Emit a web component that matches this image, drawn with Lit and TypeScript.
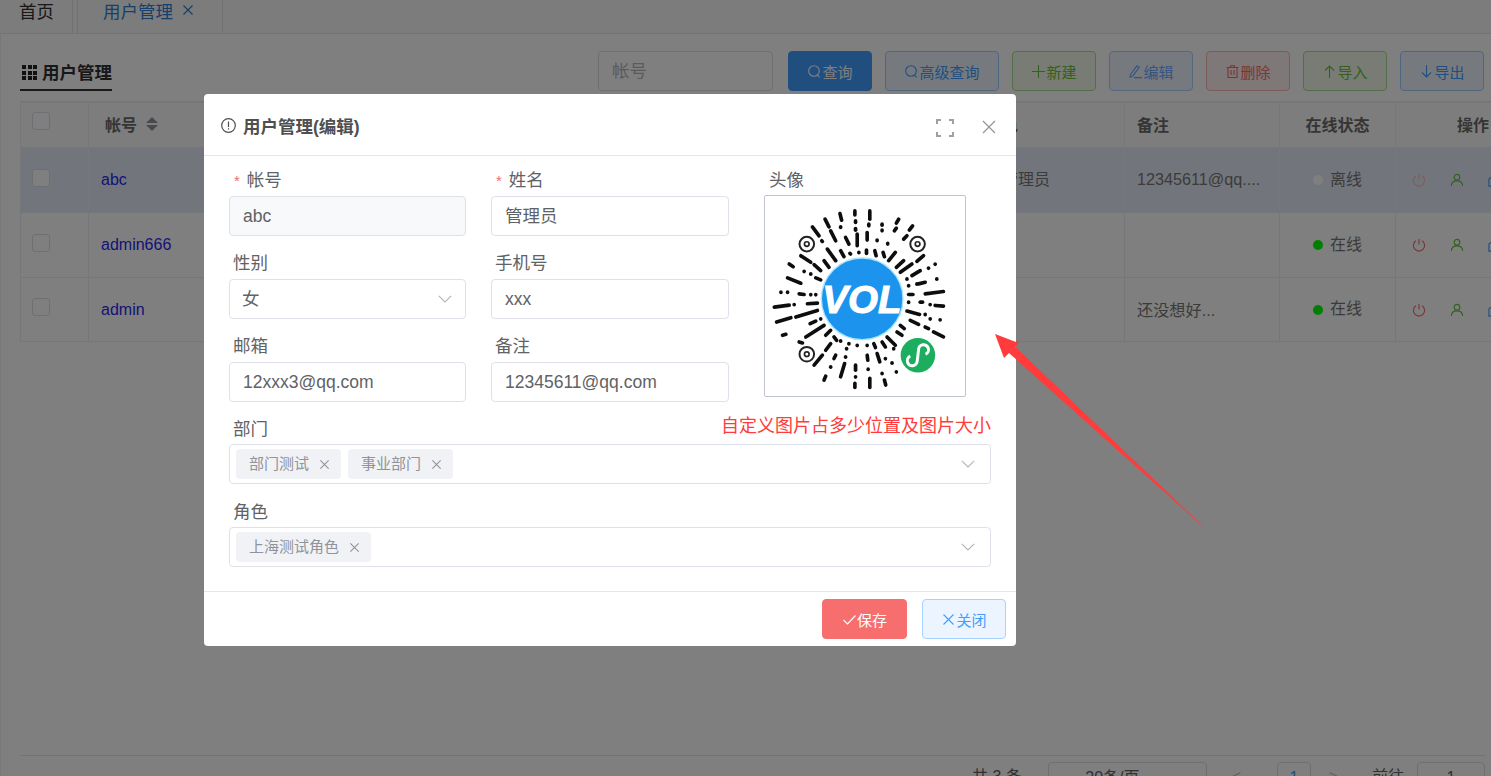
import { LitElement, html, css, svg } from "lit";
import { customElement } from "lit/decorators.js";

const X = html`<svg class="x" viewBox="0 0 12 12"><path d="M1.5 1.5l9 9M10.5 1.5l-9 9"/></svg>`;
const CHEV = html`<svg class="chev" viewBox="0 0 14 8"><path d="M.8.8L7 7l6.2-6.2"/></svg>`;
const ICONS: Record<string, any> = {
  search: svg`<circle cx="7" cy="7" r="5.3"/><path d="M10.5 11l2.2 2.4"/>`,
  plus: svg`<path d="M7.5 1v13M1 7.5h13"/>`,
  edit: svg`<path d="M2.5 10.5L9 1.800l2.200 1.600-6.600 8.800-2.600 1zM6 13.600h8"/>`,
  del: svg`<path d="M1.500 3.500h12M5.500 3.500V1.700h4v1.800M3 3.500v10h9v-10M6 6v5M9 6v5"/>`,
  up: svg`<path d="M7.500 14V2M3 6.500l4.500-4.500L12 6.500"/>`,
  down: svg`<path d="M7.500 1v12M3 8.500L7.500 13 12 8.500"/>`,
  check: svg`<path d="M1.500 8l4 4 8-8.500"/>`,
  close: svg`<path d="M2.500 2.500l10 10M12.500 2.500l-10 10"/>`,
};
const ico = (n: string) => html`<svg class="ico" viewBox="0 0 15 15">${ICONS[n]}</svg>`;

const QR_LINES: number[][] = [
  [283,60,283,72],[328,60,328,85],[238,68,243,88],[415,85,408,97],[457,105,447,118],[193,85,205,108],
  [285,90,285,95],[285,113,285,118],[325,100,325,105],[365,100,365,103],[240,108,240,110],[402,120,408,112],
  [155,108,175,135],[210,120,225,150],[290,130,290,165],[320,125,320,148],[255,140,265,160],[350,148,350,150],
  [382,158,382,160],[440,135,430,145],[365,118,365,120],[183,150,185,152],[200,175,225,210],[120,195,150,215],
  [240,180,250,198],[268,188,270,190],[295,185,295,186],[318,178,318,188],[343,180,347,195],[368,185,372,198],
  [405,185,385,210],[490,195,470,212],[160,222,180,240],[190,210,205,230],[430,210,408,230],[455,220,420,245],
  [525,220,525,221],[505,232,505,233],[85,220,97,228],[130,242,130,243],[150,250,150,251],[165,262,180,268],
  [480,240,455,255],[80,262,120,278],[495,275,475,280],[530,265,530,266],[440,265,440,266],[470,280,470,281],
  [445,285,445,286],[60,305,60,306],[80,305,80,306],[115,310,130,312],[150,312,150,313],[165,312,165,313],
  [445,312,458,312],[495,310,550,303],[40,350,85,344],[100,342,100,343],[140,340,170,338],[445,335,445,336],
  [480,335,487,335],[510,342,510,343],[525,345,550,347],[105,380,170,360],[440,362,478,372],[495,372,495,373],
  [47,395,90,382],[148,400,165,392],[180,385,180,386],[450,390,475,402],[510,385,510,386],[540,388,540,389],
  [420,405,432,415],[135,440,190,405],[195,435,210,420],[220,440,228,450],[380,440,405,465],[410,425,425,435],
  [495,410,505,415],[520,425,550,440],[65,435,75,432],[115,455,125,458],[160,525,185,495],[195,480,210,460],
  [240,452,240,453],[265,460,265,461],[290,465,290,466],[320,465,320,466],[340,460,345,472],[365,455,375,470],
  [400,475,400,476],[220,505,225,495],[258,475,258,476],[255,500,255,501],[320,495,322,510],[350,490,358,515],
  [375,505,375,506],[395,518,395,519],[240,560,252,520],[210,530,210,531],[285,525,285,540],[323,537,323,538],
  [408,545,408,546],[285,560,285,561],[195,558,190,570],[283,580,283,592],[328,565,328,592],[365,550,365,551],
  [372,570,376,585],
];
const EYES = [[138,160],[472,160],[138,492]];

const QR = html`<svg class="qr" viewBox="12 15 603 603">
  <defs><filter id="soft"><feGaussianBlur stdDeviation="1.200"/></filter></defs>
  <g filter="url(#soft)">
    <g stroke="#111" stroke-width="11" stroke-linecap="round" fill="none">
      ${QR_LINES.map((l) => svg`<line x1=${l[0]} y1=${l[1]} x2=${l[2]} y2=${l[3]}/>`)}
    </g>
    ${EYES.map((e) => svg`<circle cx=${e[0]} cy=${e[1]} r="22" fill="none" stroke="#222" stroke-width="6"/><circle cx=${e[0]} cy=${e[1]} r="7" fill="none" stroke="#222" stroke-width="5"/>`)}
    <circle cx="305" cy="325" r="123" fill="#1a94ee" stroke="#a6e4ff" stroke-width="4"/>
    <circle cx="473" cy="495" r="52" fill="#1fae5e"/>
    <path d="M450 498A15 15 0 1 0 471 512L475 478A15 15 0 1 1 496 492" fill="none" stroke="#fff" stroke-width="9"/>
  </g>
  <text x="304" y="367" text-anchor="middle" class="vol">VOL</text>
</svg>`;

const ACTIONS = html`<div class="acts">
  <svg class="power" viewBox="0 0 15 15"><path d="M7.500 1v6M4.200 3a6 6 0 1 0 6.600 0"/></svg>
  <svg class="user" viewBox="0 0 15 15"><circle cx="7.500" cy="4.500" r="3"/><path d="M1.500 14c0-3.500 2.500-5.500 6-5.500s6 2 6 5.500"/></svg>
  <svg class="home" viewBox="0 0 15 15"><path d="M1 14V6.500L7.500 1 14 6.500V14zM5 14V9h5v5"/></svg>
</div>`;

const ROWS = [
  { id: "abc", name: "管理员", note: "12345611@qq....", on: false, sel: true },
  { id: "admin666", name: "", note: "", on: true, sel: false },
  { id: "admin", name: "", note: "还没想好...", on: true, sel: false },
];

const BTNS = [
  ["search", "查询", "primary", 84],
  ["search", "高级查询", "blue", 114],
  ["plus", "新建", "green", 84],
  ["edit", "编辑", "lblue", 84],
  ["del", "删除", "red", 84],
  ["up", "导入", "green", 84],
  ["down", "导出", "blue", 84],
] as const;

@customElement("app-root")
export class AppRoot extends LitElement {
  static styles = css`
    :host { display: block; position: relative; height: 776px; overflow: hidden; background: #fff;
      font-family: "Liberation Sans", "Noto Sans CJK SC", sans-serif; color: #606266; }
    * { box-sizing: border-box; }
    svg { display: block; flex: none; }

    .tabs { display: flex; height: 34px; background: #f8f9fb; border-bottom: 1px solid #e4e7ed; font-size: 17.5px; }
    .tab { display: flex; align-items: flex-start; line-height: 24px; }
    .tab.home { width: 73px; padding-left: 19px; border-right: 1px solid #e0e3e8; color: #303133; }
    .tab.cur { width: 146px; margin-left: 4px; padding-left: 25px; border-left: 1px solid #e0e3e8; border-right: 1px solid #e0e3e8; color: #2d7fd3; gap: 9px; }
    .tab.cur .x { width: 12px; height: 12px; margin-top: 4px; stroke: #2d7fd3; }
    .x { fill: none; stroke: #909399; stroke-width: 1.2; width: 12px; height: 12px; }

    .page { height: 742px; padding: 17px 0 0 20px; border-left: 1px solid #f0f0f0; display: flex; flex-direction: column; overflow: hidden; }
    .bar { display: flex; align-items: flex-start; height: 50px; margin-left: -1px; flex: none; }
    .title { width: 92px; height: 40px; padding-top: 10px; border-bottom: 2px solid #333; display: flex; gap: 5px; font-size: 17.5px; font-weight: 700; color: #303133; line-height: 24px; white-space: nowrap; align-items: flex-start; }
    .grid9 { display: grid; grid-template-columns: repeat(3, 4px); grid-auto-rows: 4px; gap: 1.5px; margin: 4px 0 0 2px; flex: none; }
    .grid9 i { background: #222; display: block; }
    .tools { margin-left: 486px; display: flex; gap: 13px; flex: none; }
    .search { width: 175px; height: 40px; border: 1px solid #dcdfe6; border-radius: 4px; padding-left: 13px; font-size: 17.5px; line-height: 38px; color: #b4b6bb; margin-right: 2px; }
    .btn { height: 40px; border-radius: 4px; border: 1px solid; display: flex; align-items: center; justify-content: center; font-size: 15px; }
    .ico { width: 15px; height: 15px; fill: none; stroke: currentColor; stroke-width: 1.1; }
    .primary { background: #409eff; border-color: #409eff; color: #fff; }
    .blue { background: #ecf5ff; border-color: #9fcdff; color: #409eff; }
    .lblue { background: #ecf5ff; border-color: #a8d0ff; color: #6aa8ff; }
    .green { background: #f0f9eb; border-color: #a9dc8f; color: #67c23a; }
    .red { background: #fef0f0; border-color: #fab6b6; color: #f56c6c; }

    .table { border-left: 1px solid #ebeef5; margin-left: -1px; width: 1480px; flex: none; border-top: 2px solid #eeeef4; }
    .tr { display: grid; grid-template-columns: 68px 1036px 155px 116px 1fr; border-bottom: 1px solid #ebeef5; }
    .tr.head { height: 45px; background: #fafafa; color: #6a6a6a; font-weight: 700; font-size: 16px; }
    .tr.row { height: 65px; font-size: 16px; color: #777; }
    .tr.row:last-child { height: 64px; }
    .tr.sel { background: #e4ecf8; }
    .tr > div { border-right: 1px solid #ebeef5; display: flex; align-items: center; min-width: 0; }
    .head > div { padding-bottom: 3px; }
    .cb { width: 18px; height: 18px; border: 1px solid #dcdfe6; border-radius: 3px; background: #fff; margin-left: 11px; margin-top: -5px; }
    .c2 { padding-left: 12px; position: relative; }
    .head .c2 { padding-left: 16px; gap: 9px; }
    .link { color: #2828f0; }
    .sort { display: flex; flex-direction: column; gap: 2px; }
    .sort i { width: 0; height: 0; border-left: 6px solid transparent; border-right: 6px solid transparent; }
    .sort i:first-child { border-bottom: 6px solid #909399; }
    .sort i:last-child { border-top: 6px solid #909399; }
    .extra { margin-left: auto; margin-right: 74px; margin-bottom: 4px; }
    .extra.h { margin-right: 106px; margin-bottom: 0; }
    .c3 { padding-left: 12px; white-space: nowrap; }
    .row .c3 { padding-bottom: 2px; font-size: 16.2px; }
    .c4 { justify-content: center; }
    .row .c4 { justify-content: flex-start; padding: 0 0 5px 33px; gap: 7px; }
    .dot { width: 10px; height: 10px; border-radius: 50%; background: #00ff00; margin-top: 5px; }
    .dot.off { background: #fff; }
    .c5 { padding-left: 61px; white-space: nowrap; overflow: hidden; }
    .acts { display: flex; gap: 24px; margin-left: -45px; }
    .acts svg { width: 14px; height: 14px; fill: none; stroke-width: 1.2; }
    .power { stroke: #f56c6c; }
    .user { stroke: #67c23a; }
    .home { stroke: #409eff; }
    .sel .power { stroke: #f8b8b8; }

    .pager-wrap { margin-top: auto; border-top: 1px solid #e4e7ed; height: 21px; margin-left: -1px; width: 1465px; padding-top: 6px; font-size: 16px; color: #606266; display: flex; align-items: flex-start; flex: none; }
    .total { margin-left: 952px; width: 77px; white-space: nowrap; line-height: 30px; }
    .pg-sel { width: 160px; height: 30px; border: 1px solid #dcdfe6; border-radius: 4px; text-align: center; line-height: 30px; padding-right: 30px; }
    .pg-nav { width: 71px; line-height: 30px; color: #c0c4cc; padding-left: 25px; }
    .pg-num { width: 34px; height: 30px; border: 1px solid #dcdfe6; border-radius: 4px; text-align: center; line-height: 30px; color: #409eff; }
    .pg-next { width: 62px; padding-left: 18px; color: #c0c4cc; line-height: 30px; }
    .pg-go { width: 45px; line-height: 30px; white-space: nowrap; }
    .pg-in { width: 69px; height: 30px; border: 1px solid #dcdfe6; border-radius: 4px; text-align: center; line-height: 30px; }

    .mask { position: absolute; inset: 0; background: rgba(0,0,0,.5); }

    .modal { position: absolute; left: 204px; top: 94px; width: 812px; height: 552px; background: #fff; border-radius: 4px; display: flex; flex-direction: column; }
    .m-head { height: 62px; border-bottom: 1px solid #e6e6e6; display: flex; align-items: center; padding: 1px 20px 0 17px; font-size: 17.5px; font-weight: 700; color: #4f4f4f; gap: 7px; }
    .m-head .info { width: 15px; height: 15px; fill: none; stroke: #4f4f4f; stroke-width: 1.2; margin-top: 1px; }
    .m-head .fs { width: 18px; height: 18px; fill: none; stroke: #a0a0a4; stroke-width: 2; margin: 5px 0 0 auto; }
    .m-head .cl { width: 14px; height: 14px; fill: none; stroke: #909399; stroke-width: 1.2; margin: 3px 0 0 21px; }
    .m-body { padding: 11px 25px 0; flex: 1; }
    .top { display: grid; grid-template-columns: 237px 238px; column-gap: 25px; position: relative; width: 500px; }
    .f { height: 83px; display: flex; flex-direction: column; }
    .lab { font-size: 17.5px; line-height: 26px; height: 29px; padding-left: 4px; color: #606266; white-space: nowrap; }
    .req { color: #f56c6c; font-size: 15px; margin: 0 7px 0 1px; }
    .inp { height: 40px; border: 1px solid #dfe1ea; border-radius: 4px; padding: 0 13px; font-size: 17.5px; line-height: 38px; color: #606266; display: flex; align-items: center; justify-content: space-between; }
    .inp.dis { background: #f8f9fb; }
    .sel-val { margin-left: -1px; }
    .chev { width: 14px; height: 8px; fill: none; stroke: #b0b3b8; stroke-width: 1.1; }
    .wide { height: 83px; display: flex; flex-direction: column; }
    .wide .lab { height: 28px; }
    .multi { height: 40px; border: 1px solid #dfe1ea; border-radius: 4px; padding: 4px 15px 0 6px; display: flex; gap: 7px; }
    .multi .chev { margin: 11px 0 0 auto; }
    .tag { height: 30px; background: #f0f2f5; border-radius: 4px; color: #909399; font-size: 15px; line-height: 28px; display: flex; align-items: center; gap: 10px; padding: 0 11px 0 13px; white-space: nowrap; }
    .tag .x { width: 11px; height: 11px; }
    .avatar { position: absolute; left: 535px; top: -2px; width: 202px; }
    .avatar .lab { padding-left: 5px; height: 30px; line-height: 30px; }
    .pic { width: 202px; height: 202px; border: 1px solid #c0c4cc; border-radius: 2px; }
    .qr { width: 200px; height: 200px; }
    .vol { font-family: "Liberation Sans", sans-serif; font-style: italic; font-weight: 700; font-size: 116px; fill: #fff; stroke: #fff; stroke-width: 3px; }
    .note { position: absolute; right: 25px; top: 319px; font-size: 18px; line-height: 26px; color: #ff3b3b; white-space: nowrap; }
    .m-foot { height: 55px; border-top: 1px solid #e6e6e6; display: flex; justify-content: flex-end; padding: 7px 10px 0 0; gap: 15px; }
    .save { width: 85px; background: #f66e6e; border-color: #f66e6e; color: #fff; }
    .cls { width: 84px; background: #ecf5ff; border-color: #a6d2ff; color: #409eff; }
    .arrow { position: absolute; left: 990px; top: 325px; width: 225px; height: 210px; }
  `;

  render() {
    return html`
      <div class="tabs">
        <div class="tab home">首页</div>
        <div class="tab cur">用户管理 ${X}</div>
      </div>
      <div class="page">
        <div class="bar">
          <div class="title"><span class="grid9">${Array.from({ length: 9 }, () => html`<i></i>`)}</span>用户管理</div>
          <div class="tools">
            <div class="search">帐号</div>
            ${BTNS.map((b) => html`<div class="btn ${b[2]}" style="width:${b[3]}px">${ico(b[0])}${b[1]}</div>`)}
          </div>
        </div>
        <div class="table">
          <div class="tr head">
            <div><span class="cb"></span></div>
            <div class="c2">帐号<span class="sort"><i></i><i></i></span><span class="extra h">角色</span></div>
            <div class="c3">备注</div>
            <div class="c4">在线状态</div>
            <div class="c5">操作</div>
          </div>
          ${ROWS.map((r) => html`
            <div class="tr row ${r.sel ? "sel" : ""}">
              <div><span class="cb"></span></div>
              <div class="c2"><span class="link">${r.id}</span><span class="extra">${r.name}</span></div>
              <div class="c3">${r.note}</div>
              <div class="c4"><span class="dot ${r.on ? "" : "off"}"></span>${r.on ? "在线" : "离线"}</div>
              <div class="c5">${ACTIONS}</div>
            </div>`)}
        </div>
        <div class="pager-wrap">
          <span class="total">共 3 条</span>
          <div class="pg-sel">20条/页</div>
          <div class="pg-nav">&lt;</div>
          <div class="pg-num">1</div>
          <div class="pg-next">&gt;</div>
          <div class="pg-go">前往</div>
          <div class="pg-in">1</div>
        </div>
      </div>

      <div class="mask"></div>

      <div class="modal">
        <div class="m-head">
          <svg class="info" viewBox="0 0 15 15"><circle cx="7.500" cy="7.500" r="6.800"/><path d="M7.500 3.500v5.500M7.500 10.300v1.300"/></svg>
          用户管理(编辑)
          <svg class="fs" viewBox="0 0 18 18"><path d="M1 5V1h4M13 1h4v4M17 13v4h-4M5 17H1v-4"/></svg>
          <svg class="cl" viewBox="0 0 14 14"><path d="M1 1l12 12M13 1L1 13"/></svg>
        </div>
        <div class="m-body">
          <div class="top">
            <div class="f"><div class="lab"><span class="req">*</span>帐号</div><div class="inp dis">abc</div></div>
            <div class="f"><div class="lab"><span class="req">*</span>姓名</div><div class="inp">管理员</div></div>
            <div class="f"><div class="lab">性别</div><div class="inp"><span class="sel-val">女</span>${CHEV}</div></div>
            <div class="f"><div class="lab">手机号</div><div class="inp">xxx</div></div>
            <div class="f"><div class="lab">邮箱</div><div class="inp">12xxx3@qq.com</div></div>
            <div class="f"><div class="lab">备注</div><div class="inp">12345611@qq.com</div></div>
            <div class="avatar"><div class="lab">头像</div><div class="pic">${QR}</div></div>
          </div>
          <div class="wide"><div class="lab">部门</div><div class="multi">
            <span class="tag">部门测试 ${X}</span><span class="tag">事业部门 ${X}</span>${CHEV}</div></div>
          <div class="wide"><div class="lab">角色</div><div class="multi">
            <span class="tag">上海测试角色 ${X}</span>${CHEV}</div></div>
          <div class="note">自定义图片占多少位置及图片大小</div>
        </div>
        <div class="m-foot">
          <div class="btn save">${ico("check")}保存</div>
          <div class="btn cls">${ico("close")}关闭</div>
        </div>
      </div>

      <svg class="arrow" viewBox="990 325 225 210"><path d="M995 334L1019 343L1015.500 347L1209 532L1009 353L1004 358Z" fill="#ff3b3b"/></svg>
    `;
  }
}
